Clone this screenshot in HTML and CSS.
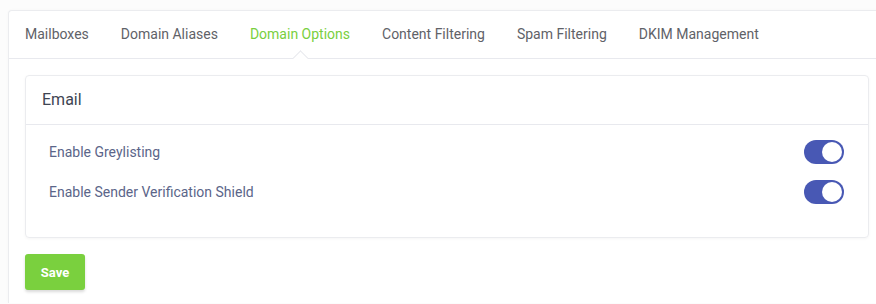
FILE: index.html
```html
<!DOCTYPE html>
<html lang="en">
<head>
    <meta charset="UTF-8">
    <meta name="viewport" content="width=device-width, initial-scale=1.0">
    <title>Domain Options</title>
    <link rel="stylesheet" href="styles.css">
</head>
<body>
    <div class="panel">
        <ul class="tabs">
            <li>Mailboxes</li>
            <li>Domain Aliases</li>
            <li class="active">Domain Options</li>
            <li>Content Filtering</li>
            <li>Spam Filtering</li>
            <li>DKIM Management</li>
        </ul>
        <div class="content">
            <div class="card">
                <div class="card-header">Email</div>
                <div class="card-body">
                    <div class="row">
                        <span>Enable Greylisting</span>
                        <label class="switch"><input type="checkbox" checked><span class="slider"></span></label>
                    </div>
                    <div class="row">
                        <span>Enable Sender Verification Shield</span>
                        <label class="switch"><input type="checkbox" checked><span class="slider"></span></label>
                    </div>
                </div>
            </div>
            <button class="save-btn">Save</button>
        </div>
    </div>
</body>
</html>
```

FILE: styles.css
```css
body {
    margin: 0;
    padding: 10px 0 0 8px;
    font-family: Roboto, "Liberation Sans", sans-serif;
    background-color: #fcfcfc;
    overflow: hidden;
}
.panel {
    width: 876px;
    background: white;
    border: 1px solid #ebecef;
    border-bottom: none;
    border-radius: 4px 4px 0 0;
    box-shadow: 0 0 3px rgba(0,0,0,0.03);
}
.tabs {
    display: flex;
    list-style: none;
    margin: 0;
    padding: 0;
    height: 47px;
    border-bottom: 1px solid #e8e9ee;
}
.tabs li {
    position: relative;
    padding: 0 16px;
    font-size: 14px;
    line-height: 47px;
    color: #5f6268;
}
.tabs li.active {
    color: #79cf3e;
}
.tabs li.active::after {
    content: "";
    position: absolute;
    left: 50%;
    bottom: 0;
    width: 10px;
    height: 10px;
    margin-left: -5px;
    background: white;
    border-left: 1px solid #e8e9ee;
    border-top: 1px solid #e8e9ee;
    transform: translateY(50%) rotate(45deg);
}
.content {
    padding: 16px 16px 13px;
}
.card {
    border: 1px solid #ebecef;
    border-radius: 4px;
    box-shadow: 0 1px 3px rgba(0,0,0,0.04);
}
.card-header {
    padding: 0 16px;
    height: 48px;
    line-height: 48px;
    font-size: 16px;
    color: #3e4452;
    border-bottom: 1px solid #e8e9ee;
}
.card-body {
    padding: 15px 24px 33px 23px;
}
.row {
    display: flex;
    justify-content: space-between;
    align-items: center;
    height: 24px;
    margin-bottom: 16px;
    font-size: 14px;
    color: #5b6589;
}
.row:last-child {
    margin-bottom: 0;
}
.switch {
    position: relative;
    width: 40px;
    height: 24px;
}
.switch input {
    display: none;
}
.slider {
    position: absolute;
    inset: 0;
    background: #ccc;
    border-radius: 12px;
}
.slider::before {
    content: "";
    position: absolute;
    top: 2px;
    left: 2px;
    width: 20px;
    height: 20px;
    border-radius: 50%;
    background: white;
}
.switch input:checked + .slider {
    background: #4858b4;
}
.switch input:checked + .slider::before {
    left: 18px;
}
.save-btn {
    margin-top: 16px;
    width: 60px;
    height: 36px;
    background-color: #7ad03e;
    color: white;
    border: none;
    border-radius: 3px;
    font-family: Roboto, "Liberation Sans", sans-serif;
    font-weight: bold;
    font-size: 13px;
    box-shadow: 0 2px 3px rgba(0,0,0,0.15);
}
```
